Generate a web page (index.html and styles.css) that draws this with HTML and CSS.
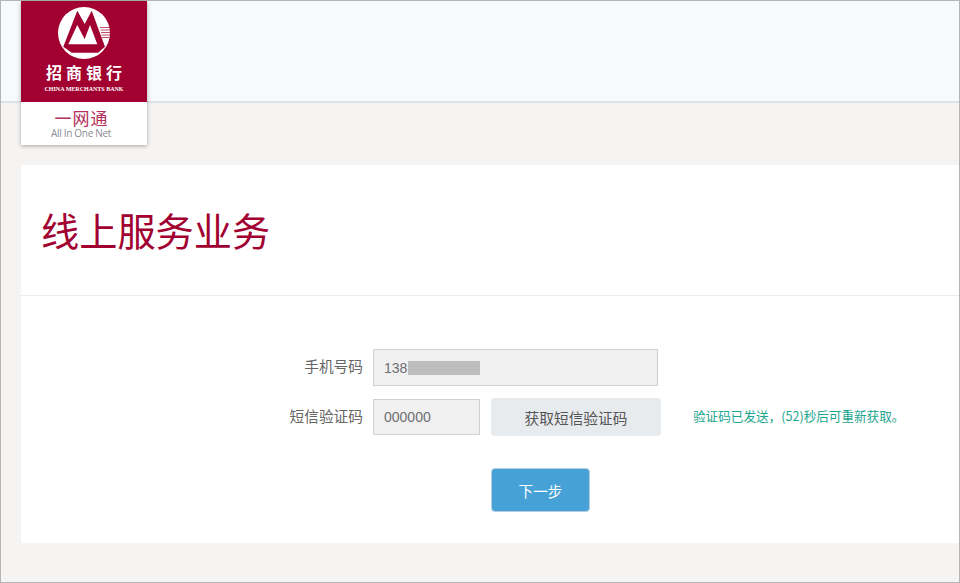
FILE: index.html
```html
<!DOCTYPE html>
<html lang="zh-CN">
<head>
<meta charset="utf-8">
<title>线上服务业务</title>
<link rel="stylesheet" href="styles.css">
</head>
<body>
<div class="shell">
  <header class="topbar"></header>
  <div class="logo">
    <div class="logo-red">
      <svg class="logo-mark" viewBox="0 0 52 52" width="52" height="52" aria-hidden="true">
        <circle cx="26" cy="26" r="26" fill="#fff"/>
        <path class="red" d="M19.300 3.700 L26.700 17 L33.700 3.700 L47 39.700 L40 45.700 L13.700 45.700 L5.300 39.700 Z"/>
        <path class="white" d="M10.300 37.300 L19.300 18 L29.300 37.300 Z M24.700 37.300 L32 18 L39.300 37.300 Z"/>
        <path class="red thin" d="M42 20h10v1h-10zM42.500 22.500h9.500v1h-9.500zM43 25h9v1h-9zM43.500 27.500h8.500v1h-8.500zM44 30h7v1h-7z"/>
      </svg>
      <div class="logo-cn">招商银行</div>
      <div class="logo-en">CHINA MERCHANTS BANK</div>
    </div>
    <div class="logo-sub">
      <div class="logo-sub-cn">一网通</div>
      <div class="logo-sub-en">All In One Net</div>
    </div>
  </div>
  <main class="card">
    <h1 class="title">线上服务业务</h1>
    <form class="form">
      <div class="row row-phone">
        <label class="label">手机号码</label>
        <div class="field field-wide">138<span class="mask"></span></div>
      </div>
      <div class="row row-code">
        <label class="label">短信验证码</label>
        <div class="field field-short">000000</div>
        <button type="button" class="btn-sms">获取短信验证码</button>
        <span class="notice">验证码已发送，(52)秒后可重新获取。</span>
      </div>
      <div class="row row-next">
        <button type="button" class="btn-next">下一步</button>
      </div>
    </form>
  </main>
</div>
</body>
</html>
```
FILE: styles.css
```css
* { box-sizing: border-box; }
html, body { margin: 0; padding: 0; }
body {
  width: 960px;
  height: 583px;
  overflow: hidden;
  font-family: "Liberation Sans", "Noto Sans CJK SC", sans-serif;
  color: #666;
}
.shell {
  position: relative;
  width: 960px;
  height: 583px;
  background: #f5f4f2;
  border: 1px solid #b4b4b4;
}
.topbar {
  height: 102px;
  background: #f6fafd;
  border-bottom: 2px solid #dfe0e2;
}
.logo {
  position: absolute;
  left: 20px;
  top: 0;
  width: 126px;
  height: 144px;
  background: #fff;
  box-shadow: 0 1px 4px rgba(0, 0, 0, .32);
}
.logo-red {
  height: 101px;
  background: #a10030;
  color: #fff;
  display: flex;
  flex-direction: column;
  align-items: center;
  padding-top: 6px;
}
.logo-mark { display: block; }
.red { fill: #a10030; }
.thin { opacity: .7; }
.white { fill: #fff; }
.logo-cn {
  margin-top: 4px;
  font-family: "Noto Sans CJK SC", sans-serif;
  font-weight: 700;
  font-size: 16px;
  line-height: 18px;
  letter-spacing: 4px;
  margin-right: -4px;
}
.logo-en {
  margin-top: 4px;
  font-family: "Liberation Serif", serif;
  font-weight: 700;
  font-size: 6px;
  line-height: 8px;
  white-space: nowrap;
}
.logo-sub { text-align: center; padding: 7px 6px 0 0; }
.logo-sub-cn {
  font-family: "Noto Sans CJK SC", sans-serif;
  font-size: 17px;
  line-height: 18px;
  letter-spacing: 1px;
  margin-right: -1px;
  color: #b5305c;
}
.logo-sub-en {
  font-family: "Open Sans", sans-serif;
  font-size: 10px;
  line-height: 12px;
  letter-spacing: -.3px;
  color: #8b8e96;
}
.card {
  margin: 62px 0 0 20px;
  height: 378px;
  background: #fff;
}
.title {
  margin: 0;
  height: 131px;
  padding: 41px 0 0 20px;
  border-bottom: 1px solid #ececec;
  font-family: "Noto Sans CJK SC", sans-serif;
  font-weight: 400;
  font-size: 38.200px;
  line-height: 48px;
  color: #a10030;
}
.form { padding-top: 53px; }
.row { display: flex; align-items: center; }
.label {
  width: 342px;
  text-align: right;
  margin-right: 10px;
  font-family: "Noto Sans CJK SC", sans-serif;
  font-size: 14.700px;
  line-height: 20px;
  position: relative;
  top: -2px;
  color: #666;
}
.row-code .label { top: -1px; }
.field {
  background: #f0f0f0;
  border: 1px solid #d0d0d0;
  font-size: 14px;
  color: #6c6f75;
  padding-left: 10px;
  display: flex;
  align-items: center;
}
.field-wide { width: 285px; height: 37px; }
.field-short { width: 107px; height: 36px; }
.mask {
  display: block;
  width: 72px;
  height: 14px;
  margin-left: 1px;
  background: #bdbdbd;
}
.row-code { margin-top: 12px; height: 38px; }
.btn-sms {
  margin-left: 11px;
  width: 170px;
  height: 38px;
  background: #e8ebee;
  border: 0;
  border-radius: 4px;
  padding: 0;
  font-family: "Noto Sans CJK SC", sans-serif;
  font-size: 14.700px;
  color: #555;
}
.notice {
  margin-left: 32px;
  position: relative;
  top: -2px;
  font-family: "Noto Sans CJK SC", sans-serif;
  font-size: 12.600px;
  color: #1ba58e;
  white-space: nowrap;
}
.row-next { margin-top: 32px; padding-left: 470px; }
.btn-next {
  width: 99px;
  height: 44px;
  background: #46a1d6;
  border: 1px solid #b5cfe0;
  border-radius: 4px;
  padding: 0;
  font-family: "Noto Sans CJK SC", sans-serif;
  font-size: 14.700px;
  color: #fff;
}
```
